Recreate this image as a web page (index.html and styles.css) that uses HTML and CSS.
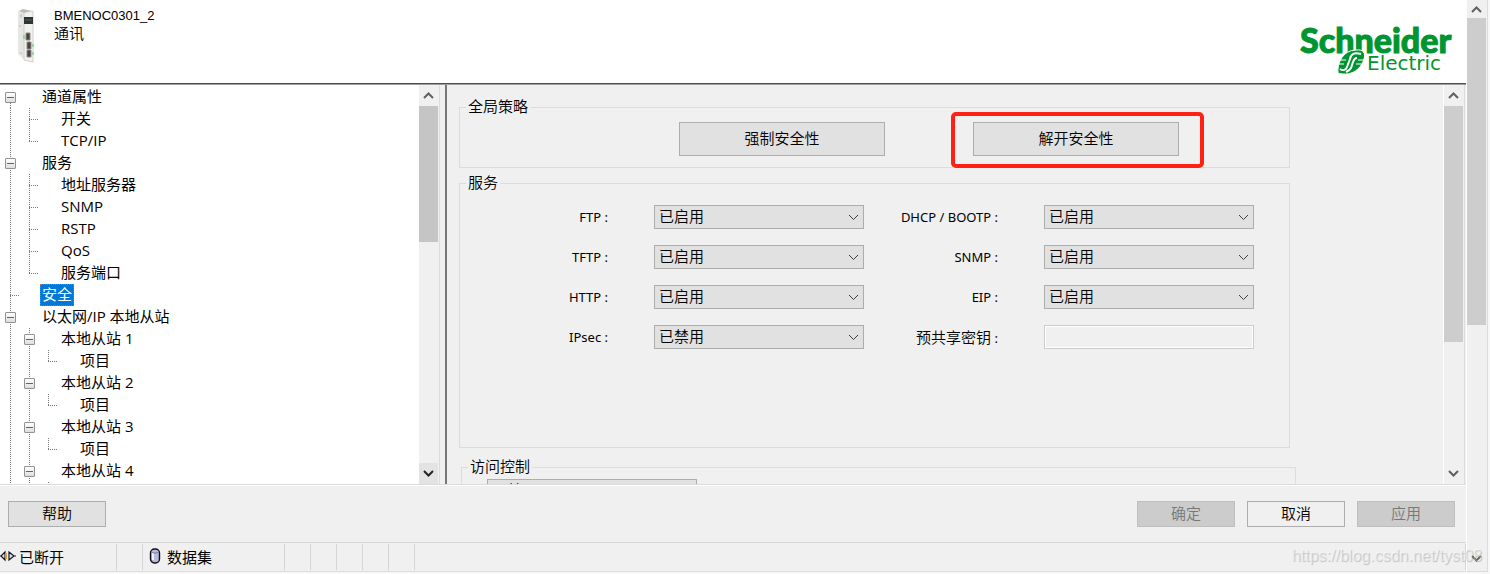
FILE: index.html
```html
<!DOCTYPE html>
<html lang="zh-CN">
<head>
  <meta charset="UTF-8">
  <title>BMENOC0301_2</title>
  <link rel="stylesheet" href="styles.css">
</head>
<body>
  <div class="window">
    <header class="header">
      <svg class="device" width="20" height="56" viewBox="0 0 20 56">
        <path d="M2 3 L7 1 L16 3 L17 54 L9 52 L2 46 Z" fill="#e6e6e2"/>
        <path d="M8 4 L17 3 L17 54 L8 52 Z" fill="#f1f1ee" stroke="#d0d0cc" stroke-width="1"/>
        <path d="M3 3 L7 1 L15 3 L8 5 Z" fill="#bdbdb8"/>
        <rect x="8" y="9" width="9" height="7" fill="#2f3437"/>
        <path d="M9 12 H16" stroke="#59635d" stroke-width="1"/>
        <path d="M10 25 h4 v7 h-4 z M11 34 h4 v7 h-4 z M11 42 h4 v7 h-4 z" fill="#4a4040" stroke="#8b8b88" stroke-width="1"/>
        <path d="M8 27 v4 M17 36 v3 M17 44 v3" stroke="#42cf5a" stroke-width="1"/>
        <path d="M5 6 v4 M4 17 v2 M5 44 v2" stroke="#b5b5b0" stroke-width="1"/>
      </svg>
      <div class="device-name">
        <div>BMENOC0301_2</div>
        <div class="device-type">通讯</div>
      </div>
      <svg class="logo" width="158" height="68" viewBox="0 -14 158 68">
        <text class="logo-main" x="0" y="31">Schneider</text>
        <path d="M38 51 C37 41 43 28 56 28 C63 27 66 31 64 37 C61 48 51 53 43 52 C40 52 38 51 38 51 Z" fill="#009530" stroke="#fff" stroke-width="1"/>
        <path d="M61 32 C54 30 51 32 50 37 L47 45 C46 48 43 49 40 47" fill="none" stroke="#fff" stroke-width="2"/>
        <path d="M57 36 C55 36 54 37 53 40 L51 46 C50 48 48 49 46 50" fill="none" stroke="#fff" stroke-width="2"/>
        <path d="M36 38 H46 M36 42 H44 M58 38 H67 M56 42 H65" stroke="#fff" stroke-width="1"/>
        <text class="logo-sub" x="67" y="48">Electric</text>
      </svg>
    </header>

    <main class="panes">
      <nav class="tree-pane">
        <div class="tree">
          <div class="row"><span class="cell node first"><button class="toggle" aria-label="折叠"></button></span><span class="label">通道属性</span></div>
          <div class="row"><span class="cell line"></span><span class="cell tee"></span><span class="label">开关</span></div>
          <div class="row"><span class="cell line"></span><span class="cell elbow"></span><span class="label">TCP/IP</span></div>
          <div class="row"><span class="cell node"><button class="toggle" aria-label="折叠"></button></span><span class="label">服务</span></div>
          <div class="row"><span class="cell line"></span><span class="cell tee"></span><span class="label">地址服务器</span></div>
          <div class="row"><span class="cell line"></span><span class="cell tee"></span><span class="label">SNMP</span></div>
          <div class="row"><span class="cell line"></span><span class="cell tee"></span><span class="label">RSTP</span></div>
          <div class="row"><span class="cell line"></span><span class="cell tee"></span><span class="label">QoS</span></div>
          <div class="row"><span class="cell line"></span><span class="cell elbow"></span><span class="label">服务端口</span></div>
          <div class="row"><span class="cell tee"></span><span class="label selected">安全</span></div>
          <div class="row"><span class="cell node"><button class="toggle" aria-label="折叠"></button></span><span class="label">以太网/IP 本地从站</span></div>
          <div class="row"><span class="cell line"></span><span class="cell node"><button class="toggle" aria-label="折叠"></button></span><span class="label">本地从站 1</span></div>
          <div class="row"><span class="cell line"></span><span class="cell line"></span><span class="cell elbow"></span><span class="label">项目</span></div>
          <div class="row"><span class="cell line"></span><span class="cell node"><button class="toggle" aria-label="折叠"></button></span><span class="label">本地从站 2</span></div>
          <div class="row"><span class="cell line"></span><span class="cell line"></span><span class="cell elbow"></span><span class="label">项目</span></div>
          <div class="row"><span class="cell line"></span><span class="cell node"><button class="toggle" aria-label="折叠"></button></span><span class="label">本地从站 3</span></div>
          <div class="row"><span class="cell line"></span><span class="cell line"></span><span class="cell elbow"></span><span class="label">项目</span></div>
          <div class="row"><span class="cell line"></span><span class="cell node"><button class="toggle" aria-label="折叠"></button></span><span class="label">本地从站 4</span></div>
          <div class="row"><span class="cell line"></span><span class="cell line"></span><span class="cell elbow"></span></div>
        </div>
        <div class="scrollbar">
          <button class="arrow" aria-label="向上"><svg width="11" height="7" viewBox="0 0 11 7"><path d="M1 6 L5.500 1.500 L10 6"/></svg></button>
          <div class="track"><div class="thumb thumb-tree"></div></div>
          <button class="arrow arrow-dark" aria-label="向下"><svg width="11" height="7" viewBox="0 0 11 7"><path d="M1 1 L5.500 5.500 L10 1"/></svg></button>
        </div>
      </nav>

      <section class="form-pane">
        <form class="form">
          <fieldset class="group">
            <legend>全局策略</legend>
            <div class="policy">
              <button type="button" class="btn btn-wide">强制安全性</button>
              <div class="marked"><button type="button" class="btn btn-wide">解开安全性</button></div>
            </div>
          </fieldset>

          <fieldset class="group services">
            <legend>服务</legend>
            <div class="fields">
              <label for="ftp">FTP :</label>
              <select id="ftp"><option>已启用</option><option>已禁用</option></select>
              <label for="dhcp">DHCP / BOOTP :</label>
              <select id="dhcp"><option>已启用</option><option>已禁用</option></select>
              <label for="tftp">TFTP :</label>
              <select id="tftp"><option>已启用</option><option>已禁用</option></select>
              <label for="snmp">SNMP :</label>
              <select id="snmp"><option>已启用</option><option>已禁用</option></select>
              <label for="http">HTTP :</label>
              <select id="http"><option>已启用</option><option>已禁用</option></select>
              <label for="eip">EIP :</label>
              <select id="eip"><option>已启用</option><option>已禁用</option></select>
              <label for="ipsec">IPsec :</label>
              <select id="ipsec"><option>已禁用</option><option>已启用</option></select>
              <label for="psk"><span class="cjk">预共享密钥</span> :</label>
              <input id="psk" type="text" disabled>
            </div>
          </fieldset>

          <fieldset class="group access">
            <legend>访问控制</legend>
            <select aria-label="访问控制"><option>已禁用</option><option>已启用</option></select>
          </fieldset>
        </form>
        <div class="scrollbar">
          <button class="arrow" aria-label="向上"><svg width="11" height="7" viewBox="0 0 11 7"><path d="M1 6 L5.500 1.500 L10 6"/></svg></button>
          <div class="track"><div class="thumb thumb-form"></div></div>
          <button class="arrow" aria-label="向下"><svg width="11" height="7" viewBox="0 0 11 7"><path d="M1 1 L5.500 5.500 L10 1"/></svg></button>
        </div>
      </section>
    </main>

    <div class="actions">
      <button class="btn btn-help">帮助</button>
      <button class="btn" disabled>确定</button>
      <button class="btn btn-cancel">取消</button>
      <button class="btn" disabled>应用</button>
    </div>

    <footer class="status">
      <div class="status-item status-link">
        <svg width="16" height="12" viewBox="0 0 16 12">
          <path d="M0 6 H1 L5 2 V10 L1 6 M14 6 H16 M9 2 V10 L14 6 Z" fill="#d9dcf5" stroke="#16162c" stroke-width="1.200"/>
          <path d="M6 3 V9" stroke="#e0a020" stroke-width="2"/>
        </svg>
        已断开
      </div>
      <div class="status-item status-gap"></div>
      <div class="status-item status-data">
        <svg width="12" height="16" viewBox="0 0 12 16">
          <rect x="1.500" y="1" width="9" height="14" rx="4" fill="#b9bbdc" stroke="#101018" stroke-width="1.400"/>
          <path d="M4 5 V12" stroke="#f2f2ff" stroke-width="2"/>
          <path d="M2.500 4 C4 5.500 8 5.500 9.500 4" fill="none" stroke="#7a7ca8"/>
        </svg>
        数据集
      </div>
      <div class="status-item status-gap"></div>
      <div class="status-item status-gap"></div>
      <div class="status-item status-gap"></div>
      <div class="status-item status-gap"></div>
      <div class="status-item status-gap"></div>
      <div class="status-item status-rest"></div>
    </footer>
  </div>

  <div class="scrollbar outer">
    <button class="arrow" aria-label="向上"><svg width="11" height="7" viewBox="0 0 11 7"><path d="M1 6 L5.500 1.500 L10 6"/></svg></button>
    <div class="track"><div class="thumb thumb-outer"></div></div>
    <button class="arrow" aria-label="向下"><svg width="11" height="7" viewBox="0 0 11 7"><path d="M1 1 L5.500 5.500 L10 1"/></svg></button>
  </div>

  <div class="watermark">https://blog.csdn.net/tyst08</div>
</body>
</html>
```
FILE: styles.css
```css
* {
  box-sizing: border-box;
}

body {
  margin: 0;
  height: 100vh;
  display: flex;
  padding: 0 2px 2px 0;
  overflow: hidden;
  background: #f7f7f7;
  color: #000;
  font-family: "Open Sans", "Noto Sans CJK SC", sans-serif;
  font-size: 15px;
}

button, select, input {
  font: inherit;
  color: inherit;
  margin: 0;
  padding: 0;
  border-radius: 0;
}

.window {
  flex: 1;
  min-width: 0;
  display: flex;
  flex-direction: column;
  background: #f0f0f0;
  border-right: 1px solid #fff;
  border-bottom: 1px solid #dcdcdc;
}

/* header */
.header {
  display: flex;
  align-items: flex-start;
  height: 85px;
  padding: 8px 8px 0 16px;
  background: #fff;
  border-bottom: 2px groove #a0a0a0;
}

.device-name {
  flex: 1;
  padding-left: 18px;
  font-family: "Liberation Sans", "Noto Sans CJK SC", sans-serif;
  font-size: 13px;
  line-height: 16px;
}

.device-type {
  font-size: 15px;
  font-weight: 350;
  line-height: 20px;
}

.logo {
  overflow: visible;
}

.logo text {
  fill: #009530;
}

.logo-main {
  font-family: Lato, sans-serif;
  font-weight: 900;
  font-size: 34px;
  stroke: #009530;
  stroke-width: 1px;
}

.logo-sub {
  font-family: "DejaVu Sans", sans-serif;
  font-size: 20px;
}

/* panes */
.panes {
  flex: 1;
  min-height: 0;
  display: flex;
  padding-right: 1px;
  border-bottom: 1px solid #dcdcdc;
}

.tree-pane {
  flex: 0 0 447px;
  display: flex;
  background: #f0f0f0;
  border-right: 2px solid #777;
}

.tree {
  flex: 1;
  padding: 1px 0 0 1px;
  background: #fff;
  overflow: hidden;
}

.row {
  display: flex;
  height: 22px;
  line-height: 20px;
}

.label {
  height: 22px;
  margin-left: 20px;
  padding: 0 2px;
  white-space: nowrap;
}

.selected {
  background: #0078d7;
  color: #fff;
  line-height: 18px;
  padding: 0 1px;
  border: 1px dotted #d2691e;
}

.cell {
  flex: 0 0 19px;
  display: flex;
  align-items: center;
  padding-left: 4px;
  background-repeat: no-repeat;
}

.line, .node {
  background-image: repeating-linear-gradient(#777 0 1px, transparent 1px 2px);
  background-size: 1px 22px;
  background-position: 9px 0;
}

.tee, .elbow {
  background-image:
    repeating-linear-gradient(#777 0 1px, transparent 1px 2px),
    repeating-linear-gradient(90deg, #777 0 1px, transparent 1px 2px);
  background-size: 1px 22px, 10px 1px;
  background-position: 9px 0, 9px 11px;
}

.elbow {
  background-size: 1px 12px, 10px 1px;
}

.first {
  background-size: 1px 11px;
  background-position: 9px 11px;
}

.toggle {
  width: 11px;
  height: 11px;
  border: 1px solid #919191;
  border-radius: 1px;
  background:
    linear-gradient(#4b63a7, #4b63a7) center / 7px 1px no-repeat,
    linear-gradient(#fff, #ddd);
}

/* scrollbars */
.scrollbar {
  flex: 0 0 21px;
  display: flex;
  flex-direction: column;
  padding-right: 1px;
  background: #f0f0f0;
  border-right: 1px solid #dcdcdc;
}

.tree-pane .scrollbar {
  margin-right: 5px;
}

.form-pane .scrollbar {
  flex-basis: 22px;
  border-left: 1px solid #fff;
}

.arrow {
  height: 21px;
  display: flex;
  align-items: center;
  justify-content: center;
  border: 0;
  background: none;
}

.arrow path {
  fill: none;
  stroke: #606060;
  stroke-width: 2;
}

.arrow-dark {
  background: #e3e3e3;
}

.arrow-dark path {
  stroke: #222;
}

.track {
  flex: 1;
}

.thumb {
  background: #cdcdcd;
}

.thumb-tree {
  height: 38%;
  background: #c5c5c5;
}

.thumb-form {
  height: 66%;
}

.thumb-outer {
  height: 58%;
}

.outer {
  padding-bottom: 2px;
  border-bottom: 1px solid #dcdcdc;
}

.outer .arrow:first-child {
  height: 18px;
}

/* form */
.form-pane {
  flex: 1;
  min-width: 0;
  display: flex;
}

.form {
  flex: 1;
  padding: 12px 12px 0;
  overflow: hidden;
}

.group {
  max-width: 831px;
  min-width: 0;
  margin: 0 0 5px;
  padding: 0;
  border: 1px solid #dcdcdc;
}

.group legend {
  margin-left: 6px;
  padding: 0 2px 2px;
  font-weight: 350;
  line-height: 18px;
}

.policy {
  display: flex;
  gap: 88px;
  padding: 5px 0 11px 219px;
}

.btn {
  width: 98px;
  height: 26px;
  padding-bottom: 2px;
  background: #e1e1e1;
  border: 1px solid #adadad;
  font-weight: 350;
  line-height: 20px;
}

.btn-wide {
  width: 206px;
  height: 34px;
}

.marked {
  position: relative;
}

.marked::after {
  content: "";
  position: absolute;
  inset: -10px -25px -12px -22px;
  border: 4px solid #ff2114;
  border-radius: 5px;
  pointer-events: none;
}

.services {
  height: 275px;
  margin-bottom: 9px;
}

.fields {
  display: grid;
  grid-template-columns: 194px 210px 180px 210px;
  gap: 16px 0;
  padding-top: 12px;
}

.fields label {
  padding-right: 46px;
  font-family: "Noto Sans", "Noto Sans CJK SC", sans-serif;
  font-size: 13px;
  line-height: 24px;
  text-align: right;
  white-space: nowrap;
}

.fields .cjk {
  font-size: 15px;
  font-weight: 350;
}

select {
  appearance: none;
  width: 210px;
  height: 24px;
  padding: 0 24px 2px 4px;
  border: 1px solid #adadad;
  font-weight: 350;
  line-height: 20px;
  background: #e1e1e1 url("data:image/svg+xml,%3Csvg xmlns='http://www.w3.org/2000/svg' width='11' height='7'%3E%3Cpath d='M1 1 L5.500 5.500 L10 1' fill='none' stroke='%23404040'/%3E%3C/svg%3E") right 4px center no-repeat;
}

input {
  width: 210px;
  height: 24px;
  background: #f0f0f0;
  border: 1px solid #ccc;
  box-shadow: inset 0 0 0 1px #fff;
}

.access {
  max-width: 835px;
  height: 120px;
  margin-left: 2px;
}

.access select {
  display: block;
  margin: 2px 0 0 25px;
}

/* buttons under the panes */
.actions {
  display: flex;
  gap: 12px;
  padding: 15px 11px 15px 8px;
  border-top: 1px solid #fff;
}

.btn-help {
  margin-right: auto;
}

.btn-cancel {
  background: #f0f0f0;
}

.btn:disabled {
  background: #ccc;
  border-color: #bfbfbf;
  color: #777;
}

/* status bar */
.status {
  display: flex;
  height: 29px;
  padding: 1px 0;
  border-top: 1px solid #d5d5d5;
}

.status-item {
  display: flex;
  align-items: center;
  padding-bottom: 2px;
  border-right: 1px solid #d5d5d5;
}

.status-link {
  width: 117px;
  gap: 3px;
}

.status-gap {
  width: 26px;
}

.status-data {
  width: 142px;
  gap: 6px;
  padding-left: 6px;
}

.status-rest {
  flex: 1;
}

.watermark {
  position: absolute;
  right: 8px;
  bottom: 8px;
  font-family: "Liberation Sans", sans-serif;
  font-size: 16px;
  line-height: 20px;
  color: rgba(255, 255, 255, 0.4);
  text-shadow: 1px 1px 1px rgba(0, 0, 0, 0.2);
  pointer-events: none;
}
```
